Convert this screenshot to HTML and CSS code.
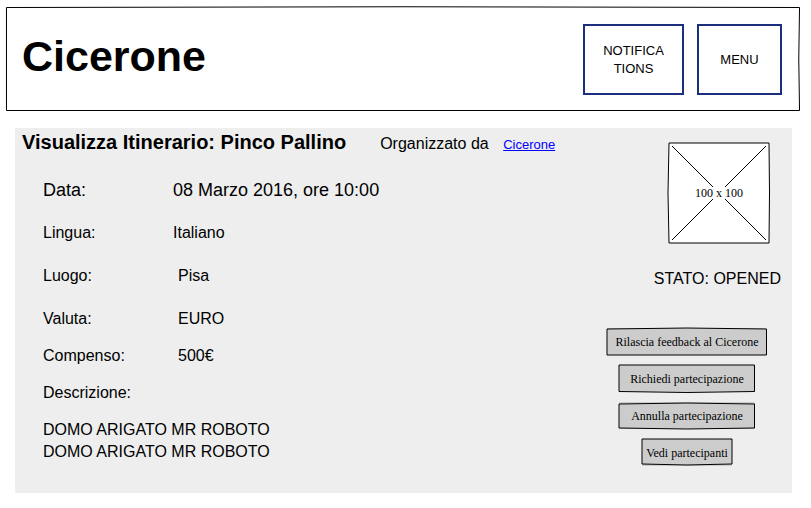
FILE: index.html
```html
<!DOCTYPE html>
<html lang="it">
<head>
<meta charset="utf-8">
<title>Cicerone</title>
<link rel="stylesheet" href="styles.css">
</head>
<body>
<header class="topbar">
  <svg class="outline" viewBox="0 0 100 104" preserveAspectRatio="none" aria-hidden="true"><path d="M0.06 0.5Q50 -1 99.94 0.5Q99.75 52 99.94 103.5H0.06Z"/></svg>
  <h1 class="brand">Cicerone</h1>
  <nav class="nav">
    <button class="nav-button nav-button-wide" type="button">NOTIFICA<wbr>TIONS</button>
    <button class="nav-button" type="button">MENU</button>
  </nav>
</header>
<main class="panel">
  <section class="details">
    <div class="heading">
      <h2 class="title">Visualizza Itinerario: Pinco Pallino</h2>
      <p class="organizer">Organizzato da <a class="organizer-link" href="#">Cicerone</a></p>
    </div>
    <dl class="facts">
      <div class="row row-large"><dt>Data:</dt><dd>08 Marzo 2016, ore 10:00</dd></div>
      <div class="row"><dt>Lingua:</dt><dd>Italiano</dd></div>
      <div class="row"><dt>Luogo:</dt><dd class="inset">Pisa</dd></div>
      <div class="row"><dt>Valuta:</dt><dd class="inset">EURO</dd></div>
      <div class="row"><dt>Compenso:</dt><dd class="inset">500€</dd></div>
      <div class="row row-stacked"><dt>Descrizione:</dt><dd>DOMO ARIGATO MR ROBOTO<br>DOMO ARIGATO MR ROBOTO</dd></div>
    </dl>
  </section>
  <aside class="side">
    <svg class="photo" viewBox="0 0 104 102" role="img" aria-label="100 x 100">
      <path class="photo-frame" d="M2 1H102Q103 51 102 101H2Q0 51 2 1Z"/>
      <path class="photo-cross" d="M5 4L46 45M58 57L99 98M99 4L58 45M46 57L5 98"/>
      <text x="52" y="55" text-anchor="middle">100 x 100</text>
    </svg>
    <p class="status">STATO: OPENED</p>
    <div class="actions">
      <button class="action action-wide" type="button">
        <svg class="outline" viewBox="0 0 160 27" preserveAspectRatio="none" aria-hidden="true"><path d="M0 1Q80 -1 159.5 1V27H0Z"/></svg>
        <span>Rilascia feedback al Cicerone</span>
      </button>
      <button class="action" type="button">
        <svg class="outline" viewBox="0 0 136 27" preserveAspectRatio="none" aria-hidden="true"><path d="M0 0H135.5V26.5Q68 28.5 0 26.5Z"/></svg>
        <span>Richiedi partecipazione</span>
      </button>
      <button class="action" type="button">
        <svg class="outline" viewBox="0 0 136 27" preserveAspectRatio="none" aria-hidden="true"><path d="M0 2Q68 0 135.5 2V26Q68 28 0 26Z"/></svg>
        <span>Annulla partecipazione</span>
      </button>
      <button class="action action-narrow" type="button">
        <svg class="outline" viewBox="0 0 90 27" preserveAspectRatio="none" aria-hidden="true"><path d="M0 0H90V25Q45 27 0 25Z"/></svg>
        <span>Vedi partecipanti</span>
      </button>
    </div>
  </aside>
</main>
</body>
</html>
```

FILE: styles.css
```css
* {
  box-sizing: border-box;
}

body {
  margin: 0;
  padding: 7px 11px 15px 6px;
  background: #fff;
  color: #000;
  font: 16px/22px "Liberation Sans", sans-serif;
}

h1, h2, p, dl, dd {
  margin: 0;
}

.outline {
  position: absolute;
  inset: 0;
  width: 100%;
  height: 100%;
  overflow: visible;
  fill: none;
  stroke: #000;
  pointer-events: none;
}

.outline path {
  vector-effect: non-scaling-stroke;
}

.topbar {
  position: relative;
  display: flex;
  justify-content: space-between;
  align-items: center;
  min-height: 104px;
  padding: 0 18px 0 16px;
}

.brand {
  font-size: 43px;
  line-height: 48px;
  padding-bottom: 6px;
}

.nav {
  display: flex;
  gap: 13px;
  padding-top: 1px;
}

.nav-button {
  width: 85px;
  height: 71px;
  padding: 0 16px;
  border: 2px solid #1b2f7e;
  background: #fff;
  color: #000;
  font: 13px/18px "Liberation Sans", sans-serif;
}

.nav-button-wide {
  width: 101px;
}

.panel {
  display: flex;
  justify-content: space-between;
  margin: 17px 8px 0 9px;
  padding: 3px 11px 27px 7px;
  background: #eee;
}

.heading {
  display: flex;
  align-items: baseline;
  gap: 34px;
}

.title {
  font-size: 20px;
  line-height: 22px;
}

.organizer-link {
  margin-left: 10px;
  color: #00f;
  font-size: 13px;
}

.facts {
  display: flex;
  flex-direction: column;
  gap: 15px;
  padding: 23px 0 0 21px;
}

.row {
  display: flex;
}

.row dt {
  width: 130px;
}

.row:nth-child(-n+3) {
  margin-bottom: 6px;
}

.row-large {
  font-size: 18px;
}

.row-stacked {
  flex-direction: column;
  gap: 15px;
}

.inset {
  padding-left: 5px;
}

.side {
  display: flex;
  flex-direction: column;
  align-items: flex-end;
  padding-top: 11px;
}

.photo {
  width: 104px;
  height: 102px;
  margin-right: 10px;
  font: 12px "Liberation Serif", serif;
}

.photo-frame {
  fill: #fff;
  stroke: #000;
}

.photo-cross {
  fill: none;
  stroke: #000;
}

.status {
  margin-top: 24px;
}

.actions {
  display: flex;
  flex-direction: column;
  align-items: center;
  gap: 10px;
  margin: 38px 14px 0 0;
}

.action {
  position: relative;
  width: 136px;
  height: 27px;
  padding: 0;
  border: 0;
  background: #ccc;
  color: #000;
  font: 12px/18px "Liberation Serif", serif;
}

.action-wide {
  width: 160px;
}

.action-narrow {
  width: 90px;
}
```
